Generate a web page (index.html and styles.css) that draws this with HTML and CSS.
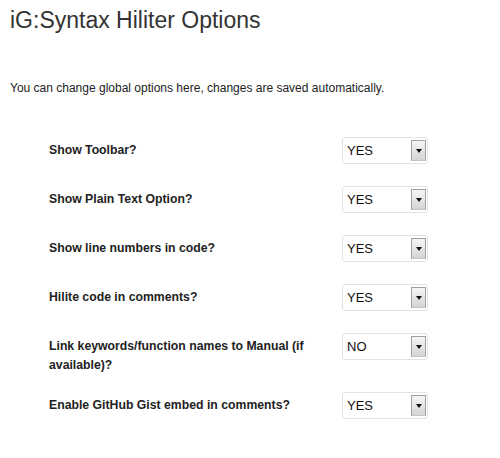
FILE: index.html
```html
<!DOCTYPE html>
<html>
<head>
<meta charset="utf-8">
<link rel="stylesheet" href="styles.css">
</head>
<body>
<div class="wrap">
  <h1 class="title">iG:Syntax Hiliter Options</h1>
  <p class="desc">You can change global options here, changes are saved automatically.</p>
  <div class="options">
    <div class="row">
      <div class="label">Show Toolbar?</div>
      <div class="select"><span class="val">YES</span><span class="btn"><span class="tri"></span></span></div>
    </div>
    <div class="row">
      <div class="label">Show Plain Text Option?</div>
      <div class="select"><span class="val">YES</span><span class="btn"><span class="tri"></span></span></div>
    </div>
    <div class="row">
      <div class="label">Show line numbers in code?</div>
      <div class="select"><span class="val">YES</span><span class="btn"><span class="tri"></span></span></div>
    </div>
    <div class="row">
      <div class="label">Hilite code in comments?</div>
      <div class="select"><span class="val">YES</span><span class="btn"><span class="tri"></span></span></div>
    </div>
    <div class="row">
      <div class="label">Link keywords/function names to Manual (if available)?</div>
      <div class="select"><span class="val">NO</span><span class="btn"><span class="tri"></span></span></div>
    </div>
    <div class="row">
      <div class="label">Enable GitHub Gist embed in comments?</div>
      <div class="select"><span class="val">YES</span><span class="btn"><span class="tri"></span></span></div>
    </div>
  </div>
</div>
</body>
</html>
```
FILE: styles.css
```css
html, body {
  margin: 0;
  padding: 0;
  background: #fff;
}
body {
  font-family: "Liberation Sans", Arial, sans-serif;
  color: #333;
}
.wrap {
  padding-left: 10px;
}
.title {
  margin: 6px 0 0 0;
  font-size: 23px;
  line-height: 29px;
  font-weight: normal;
  color: #333;
}
.desc {
  margin: 44px 0 0 0;
  font-size: 12px;
  line-height: 18px;
  color: #222;
}
.options {
  margin-top: 29px;
  padding-left: 39px;
}
.row {
  display: flex;
  align-items: flex-start;
  padding: 11px 0 6px 0;
}
.label {
  width: 280px;
  padding-top: 4px;
  font-size: 12.25px;
  line-height: 19px;
  font-weight: bold;
  color: #222;
}
.select {
  margin-left: 13px;
  margin-bottom: 5px;
  width: 86px;
  height: 27px;
  box-sizing: border-box;
  border: 1px solid #e2e2e2;
  border-radius: 3px;
  display: flex;
  align-items: center;
  justify-content: space-between;
  padding: 0 1px 0 4px;
  background: #fff;
}
.val {
  font-size: 13px;
  color: #111;
}
.btn {
  width: 15px;
  height: 21px;
  box-sizing: border-box;
  border: 1px solid #a0a0a0;
  border-bottom-color: #c4c4c4;
  background: linear-gradient(#f6f6f6, #d4d4d4);
  display: flex;
  align-items: center;
  justify-content: center;
}
.tri {
  width: 0;
  height: 0;
  border-left: 3.5px solid transparent;
  border-right: 3.5px solid transparent;
  border-top: 4px solid #111;
}
```
